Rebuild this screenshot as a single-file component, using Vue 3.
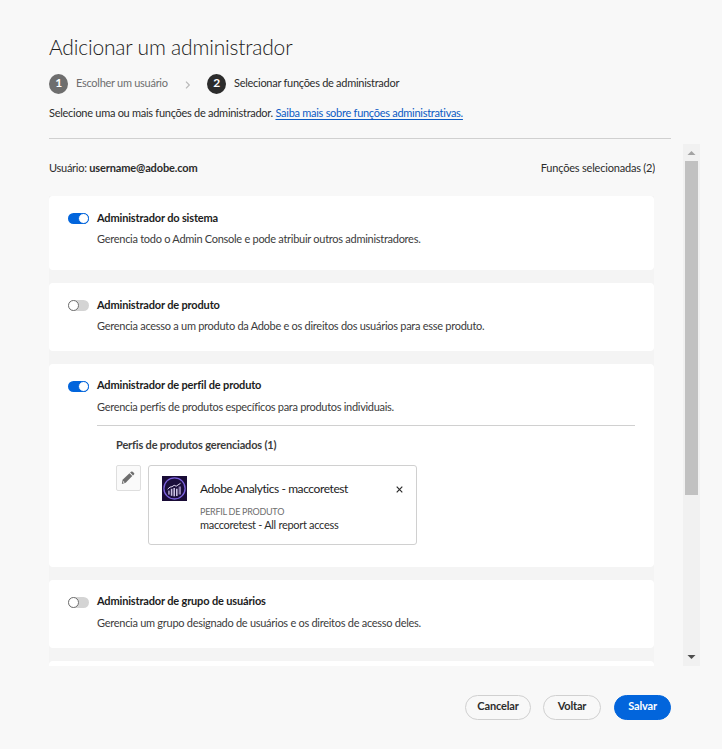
<script setup>
const roles = [
  { id: 'system', size: 'tall', on: true, title: 'Administrador do sistema', text: 'Gerencia todo o Admin Console e pode atribuir outros administradores.' },
  { id: 'product', size: 'short', on: false, title: 'Administrador de produto', text: 'Gerencia acesso a um produto da Adobe e os direitos dos usuários para esse produto.' },
  { id: 'profile', size: 'expanded', on: true, title: 'Administrador de perfil de produto', text: 'Gerencia perfis de produtos específicos para produtos individuais.' },
  { id: 'group', size: 'short', on: false, title: 'Administrador de grupo de usuários', text: 'Gerencia um grupo designado de usuários e os direitos de acesso deles.' }
]
</script>

<template>
  <main class="page">
    <h1 class="title">Adicionar um administrador</h1>
    <nav class="steps">
      <span class="num num-done">1</span>
      <span class="step step-done">Escolher um usuário</span>
      <svg class="chevron" viewBox="0 0 6 8"><path d="M1 0.7 4.3 4 1 7.3" /></svg>
      <span class="num">2</span>
      <span class="step">Selecionar funções de administrador</span>
    </nav>
    <p class="intro"><span>Selecione uma ou mais funções de administrador.</span> <a class="link">Saiba mais sobre funções administrativas.</a></p>
    <div class="rule"></div>

    <div class="body">
      <section class="content">
        <header class="summary">
          <span>Usuário: <b class="user">username@adobe.com</b></span>
          <span class="count">Funções selecionadas (2)</span>
        </header>
        <div class="list">
          <article v-for="r in roles" :key="r.id" class="card" :class="r.size">
            <span class="toggle" :class="{ on: r.on }"><i class="knob"></i></span>
            <div class="info" :class="'role-' + r.id">
              <h2 class="name">{{ r.title }}</h2>
              <p class="desc">{{ r.text }}</p>
              <div v-if="r.size === 'expanded'" class="profiles">
                <h3 class="sub">Perfis de produtos gerenciados (1)</h3>
                <div class="row">
                  <button class="edit">
                    <svg width="14" height="14" viewBox="0 0 14 14">
                      <path d="M1.6 8.8 8.5 2.2 11.3 5 4.7 11.7.8 13.1Z" fill="#6e6e6e" />
                      <path d="M9.1 1.6 10 .8Q10.8 0 11.7.8L13 2Q13.8 2.8 13 3.6L12 4.5Z" fill="#6e6e6e" />
                      <path d="M2.4 10 3.7 11.3 1.9 12Z" fill="#fafafa" />
                    </svg>
                  </button>
                  <div class="profile-box">
                    <svg class="logo" width="25" height="25" viewBox="0 0 25 25">
                      <rect width="25" height="25" fill="#190b36" />
                      <circle cx="12.5" cy="12.4" r="10.6" fill="#1b0e3c" stroke="#7b61dc" stroke-width="1.3" />
                      <g fill="#c9bfe2">
                        <rect x="6.3" y="14.6" width="1.3" height="4" />
                        <rect x="8.8" y="12.8" width="1.6" height="7" />
                        <rect x="11.4" y="12" width="1.6" height="8.3" />
                        <rect x="14" y="12.7" width="1.6" height="7.3" />
                      </g>
                      <rect x="16.6" y="10.5" width="2.4" height="8" fill="#8a7cab" />
                      <path d="M5.6 13.2 8 11.1 10 10.7 12.2 9.3 14.2 10.2 18.5 7.3" fill="none" stroke="#dcd4ef" stroke-width="1" />
                    </svg>
                    <div class="profile-text">
                      <span class="product">Adobe Analytics - maccoretest</span>
                      <span class="label">PERFIL DE PRODUTO</span>
                      <span class="value">maccoretest - All report access</span>
                    </div>
                    <svg class="close" width="7" height="7" viewBox="0 0 7 7"><path d="M.7.7 6.3 6.3M6.3.7.7 6.3" /></svg>
                  </div>
                </div>
              </div>
            </div>
          </article>
          <article class="card next"></article>
        </div>
      </section>
      <div class="scrollbar">
        <svg width="17" height="17" viewBox="0 0 17 17"><path d="M4.5 11 8.5 7 12.5 11Z" fill="#a3a3a3" /></svg>
        <div class="thumb"></div>
        <svg class="down" width="17" height="17" viewBox="0 0 17 17"><path d="M4.5 6 8.5 10 12.5 6Z" fill="#4d4d4d" /></svg>
      </div>
    </div>

    <footer class="actions">
      <button class="btn cancel">Cancelar</button>
      <button class="btn back">Voltar</button>
      <button class="btn save">Salvar</button>
    </footer>
  </main>
</template>

<style>
body { margin: 0; background: #f8f8f8; }
</style>

<style scoped>
* { box-sizing: border-box; }
h1, h2, h3, p { margin: 0; }
.page { width: 722px; height: 749px; padding: 32px 0 0 49px; overflow: hidden; background: #f8f8f8; color: #2c2c2c; font-family: Lato, "Noto Sans", sans-serif; font-size: 11px; line-height: 16px; letter-spacing: -0.275px; white-space: nowrap; }
.title { height: 41px; line-height: 29px; font-size: 21px; font-weight: 300; letter-spacing: -0.19px; color: #1c1c1c; }
.steps { display: flex; align-items: center; height: 21px; }
.num { flex: none; width: 19px; height: 20px; border-radius: 50%; background: #2c2c2c; color: #fff; font-size: 12px; line-height: 17px; font-weight: 700; text-align: center; }
.num-done { background: #6e6e6e; }
.step { flex: none; margin-left: 8px; margin-top: -1px; }
.step-done { color: #6e6e6e; width: 93px; }
.chevron { flex: none; width: 6px; height: 8px; margin: 2px 16px 0 16px; fill: none; stroke: #b8b8b8; stroke-width: 1.2; }
.intro { margin-top: 11px; }
.link { color: #0d5bc4; text-decoration: underline; text-underline-offset: 2px; }
.rule { width: 622px; height: 1px; margin-top: 17px; background: #d0d0d0; }
.body { display: flex; justify-content: space-between; width: 651px; height: 522px; margin-top: 5px; }
.content { width: 606px; height: 522px; overflow: hidden; }
.summary { display: flex; justify-content: space-between; height: 52px; padding-top: 16px; }
.user { font-weight: 700; letter-spacing: -0.13px; }
.count { letter-spacing: -0.2px; }
.list { width: 605px; height: 470px; display: flex; flex-direction: column; gap: 13px; overflow: hidden; background: #f4f4f4; }
.card { flex: none; display: flex; gap: 8px; padding: 14px 19px 0; border-radius: 4px; background: #fff; }
.tall { height: 74px; }
.short { height: 68px; }
.expanded { height: 203px; }
.next { height: 68px; }
.toggle { flex: none; width: 21px; height: 11px; margin-top: 3px; border-radius: 6px; background: #d4d4d4; }
.knob { display: block; width: 11px; height: 11px; border: 1px solid #707070; border-radius: 50%; background: #fff; }
.toggle.on { background: #0265dc; }
.on .knob { margin-left: 10px; border-color: #0265dc; }
.info { flex: 1; }
.name { font-size: 11px; line-height: 16px; font-weight: 700; letter-spacing: -0.16px; color: #1c1c1c; }
.desc { margin-top: 5px; color: #3c3c3c; }
.role-profile .name, .role-group .name { margin-top: -1px; }
.role-profile .desc, .role-group .desc { margin-top: 6px; }
.role-profile .desc { letter-spacing: -0.295px; }
.profiles { margin-top: 10px; padding: 11px 0 0 19px; border-top: 1px solid #d0d0d0; }
.sub { font-size: 11px; line-height: 16px; font-weight: 700; letter-spacing: -0.17px; color: #3c3c3c; }
.row { display: flex; gap: 7px; margin-top: 12px; }
.edit { display: flex; align-items: center; justify-content: center; width: 25px; height: 26px; padding: 0 1px 0 0; border: 1px solid #dedede; border-radius: 2px; background: #fafafa; }
.profile-box { display: flex; width: 269px; height: 80px; padding: 10px 13px; border: 1px solid #d0d0d0; border-radius: 3px; }
.profile-text { display: flex; flex-direction: column; flex: 1; margin-left: 13px; padding-top: 5px; }
.product { font-size: 12px; line-height: 16px; letter-spacing: -0.42px; color: #1c1c1c; }
.label { margin-top: 7px; height: 13px; font-size: 9px; color: #6e6e6e; }
.value { letter-spacing: -0.3px; }
.close { margin-top: 10px; fill: none; stroke: #2c2c2c; stroke-width: 1.2; }
.scrollbar { display: flex; flex-direction: column; align-items: center; width: 17px; height: 522px; background: #f1f1f1; }
.thumb { width: 13px; height: 334px; background: #c1c1c1; }
.down { margin-top: auto; }
.actions { display: flex; align-items: flex-start; margin: 29px 0 0 416px; }
.btn { height: 25px; padding: 0 0 3px; border: 1px solid #d0d0d0; border-radius: 13px; background: #f8f8f8; color: #2c2c2c; font: inherit; font-weight: 700; line-height: 16px; letter-spacing: -0.16px; }
.cancel { width: 66px; }
.back { width: 58px; margin-left: 12px; }
.save { width: 57px; margin-left: 13px; border-color: #0265dc; background: #0265dc; color: #fff; }
</style>
